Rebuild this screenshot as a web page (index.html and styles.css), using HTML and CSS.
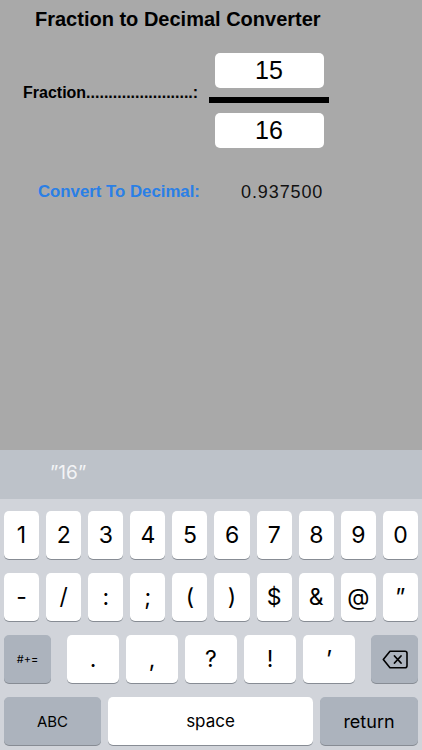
FILE: index.html
```html
<!DOCTYPE html>
<html>
<head>
<meta charset="utf-8">
<link rel="stylesheet" href="styles.css">
</head>
<body>
<div class="screen">
  <main class="app">
    <h1 class="title">Fraction to Decimal Converter</h1>
    <div class="fraction-row">
      <div class="fraction-label">Fraction........................:</div>
      <div class="fraction">
        <div class="field">15</div>
        <div class="bar"></div>
        <div class="field">16</div>
      </div>
    </div>
    <div class="result-row">
      <div class="result-label">Convert To Decimal:</div>
      <div class="result-value">0.937500</div>
    </div>
  </main>
  <section class="keyboard">
    <div class="suggest"><span class="suggest-text">”16”</span></div>
    <div class="keys">
      <div class="row row-10">
        <div class="key">1</div><div class="key">2</div><div class="key">3</div><div class="key">4</div><div class="key">5</div>
        <div class="key">6</div><div class="key">7</div><div class="key">8</div><div class="key">9</div><div class="key">0</div>
      </div>
      <div class="row row-10">
        <div class="key">-</div><div class="key">/</div><div class="key">:</div><div class="key">;</div><div class="key">(</div>
        <div class="key">)</div><div class="key">$</div><div class="key">&amp;</div><div class="key">@</div><div class="key">”</div>
      </div>
      <div class="row row-3">
        <div class="key special sym">#+=</div>
        <div class="mid">
          <div class="key">.</div><div class="key">,</div><div class="key">?</div><div class="key">!</div><div class="key">’</div>
        </div>
        <div class="key special">
          <svg class="del" width="26" height="19" viewBox="0 0 26 19">
            <path d="M8 1.2 H23 A2 2 0 0 1 25 3.2 V15.8 A2 2 0 0 1 23 17.8 H8 L1.3 9.5 Z" fill="none" stroke="#000" stroke-width="1.6" stroke-linejoin="round"/>
            <path d="M12.5 6 L19 13 M19 6 L12.5 13" stroke="#000" stroke-width="1.8" stroke-linecap="round"/>
          </svg>
        </div>
      </div>
      <div class="row row-4">
        <div class="key special abc">ABC</div>
        <div class="key space">space</div>
        <div class="key special ret">return</div>
      </div>
    </div>
  </section>
</div>
</body>
</html>
```
FILE: styles.css
```css
html, body {
  margin: 0;
  padding: 0;
}
body {
  width: 422px;
  height: 750px;
  overflow: hidden;
  background: #a9a9a9;
  font-family: "Liberation Sans", Arial, sans-serif;
}
.screen {
  display: flex;
  flex-direction: column;
  height: 750px;
}
.app {
  height: 450px;
  box-sizing: border-box;
  padding-top: 7px;
}
.title {
  margin: 0 0 0 35px;
  font-size: 20px;
  line-height: 24px;
  font-weight: bold;
  color: #000;
}
.fraction-row {
  display: flex;
  margin-top: 22px;
  padding-left: 23px;
}
.fraction-label {
  width: 186px;
  margin-top: 30px;
  font-size: 16px;
  line-height: 20px;
  font-weight: bold;
  color: #000;
  white-space: nowrap;
  overflow: hidden;
}
.fraction {
  width: 120px;
  display: flex;
  flex-direction: column;
  align-items: center;
}
.field {
  width: 109px;
  height: 35px;
  background: #fff;
  border-radius: 5px;
  font-size: 25px;
  line-height: 35px;
  text-align: center;
  color: #000;
}
.bar {
  width: 120px;
  height: 6px;
  background: #000;
  margin: 9px 0 10px;
}
.result-row {
  display: flex;
  margin-top: 34px;
  padding-left: 38px;
  line-height: 20px;
}
.result-label {
  width: 203px;
  font-size: 16.8px;
  font-weight: bold;
  color: #2a7fe6;
}
.result-value {
  font-size: 18px;
  letter-spacing: 0.9px;
  color: #111;
}
.keyboard {
  height: 300px;
  display: flex;
  flex-direction: column;
  font-family: Inter, "Liberation Sans", sans-serif;
}
.suggest {
  height: 49px;
  background: #bdc2c9;
  display: flex;
  align-items: center;
  padding-left: 50px;
  box-sizing: border-box;
  padding-bottom: 4px;
}
.suggest-text {
  font-size: 19px;
  color: #f3f4f6;
}
.keys {
  flex: 1;
  background: #d1d4da;
  padding: 12px 4px 0;
  display: flex;
  flex-direction: column;
  gap: 14px;
}
.row {
  height: 48px;
}
.row-10 {
  display: grid;
  grid-template-columns: repeat(10, 1fr);
  gap: 7px;
}
.row-3 {
  display: flex;
  justify-content: space-between;
}
.row-3 .special {
  width: 47px;
}
.mid {
  display: flex;
  gap: 7px;
}
.mid .key {
  width: 52px;
}
.row-4 {
  display: flex;
  gap: 7px;
}
.key {
  background: #fff;
  border-radius: 5px;
  box-shadow: 0 1px 0 #878c94;
  display: flex;
  align-items: center;
  justify-content: center;
  font-size: 23px;
  color: #000;
  height: 48px;
}
.key.special {
  background: #acb3bd;
}
.sym {
  font-size: 11px;
}
.abc {
  width: 97px;
  font-size: 15px;
}
.space {
  width: 205px;
  font-size: 17px;
}
.ret {
  width: 98px;
  font-size: 18px;
}
.del {
  display: block;
}
```
